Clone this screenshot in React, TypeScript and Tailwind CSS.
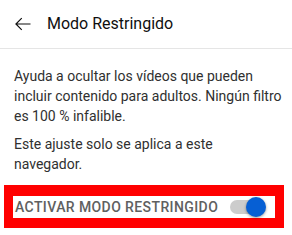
import React, { useState } from 'react';

const App: React.FC = () => {
  const [enabled, setEnabled] = useState(true);

  return (
    <div className="w-[292px] h-[235px] bg-white overflow-hidden" style={{ fontFamily: 'Roboto, "Liberation Sans", sans-serif' }}>
      {/* Header */}
      <div className="flex items-center h-[49px] border-b border-[#e5e5e5] pl-[13px]">
        <button className="w-[20px] h-[20px] flex items-center justify-center text-[#0f0f0f]">
          <svg width="20" height="20" viewBox="0 0 24 24" fill="none" stroke="currentColor" strokeWidth="1.4">
            <path d="M21 12H3.5M10.5 5l-7 7 7 7" />
          </svg>
        </button>
        <span className="ml-[14px] text-[16px] text-[#0f0f0f]">Modo Restringido</span>
      </div>

      {/* Body */}
      <div className="pl-[14px] pr-[4px] pt-[17px] text-[14px] leading-[20px] text-[#303030] whitespace-nowrap">
        <p>
          Ayuda a ocultar los vídeos que pueden
          <br />
          incluir contenido para adultos. Ningún filtro
          <br />
          es 100 % infalible.
        </p>
        <p className="mt-[8px]">
          Este ajuste solo se aplica a este
          <br />
          navegador.
        </p>
      </div>

      {/* Toggle row (highlighted) */}
      <div className="ml-[4px] mt-[11px] w-[280px] border-[#ff0000] border-x-[9px] border-t-[11px] border-b-[10px]">
        <div className="flex items-center justify-between h-[22px] pl-[2px] pr-[9px]">
          <span className="text-[14px] font-medium uppercase text-[#606060] tracking-[0.4px]">Activar modo restringido</span>
          <button onClick={() => setEnabled(!enabled)} className="relative w-[36px] h-[20px] flex items-center">
            <span className="w-[34px] h-[14px] rounded-full bg-[#cccccc]" />
            <span className={`absolute top-0 w-[20px] h-[20px] rounded-full shadow-[0_1px_3px_rgba(0,0,0,0.4)] ${enabled ? 'right-0 bg-[#065fd4]' : 'left-0 bg-[#f1f1f1]'}`} />
          </button>
        </div>
      </div>
    </div>
  );
};

export default App;
